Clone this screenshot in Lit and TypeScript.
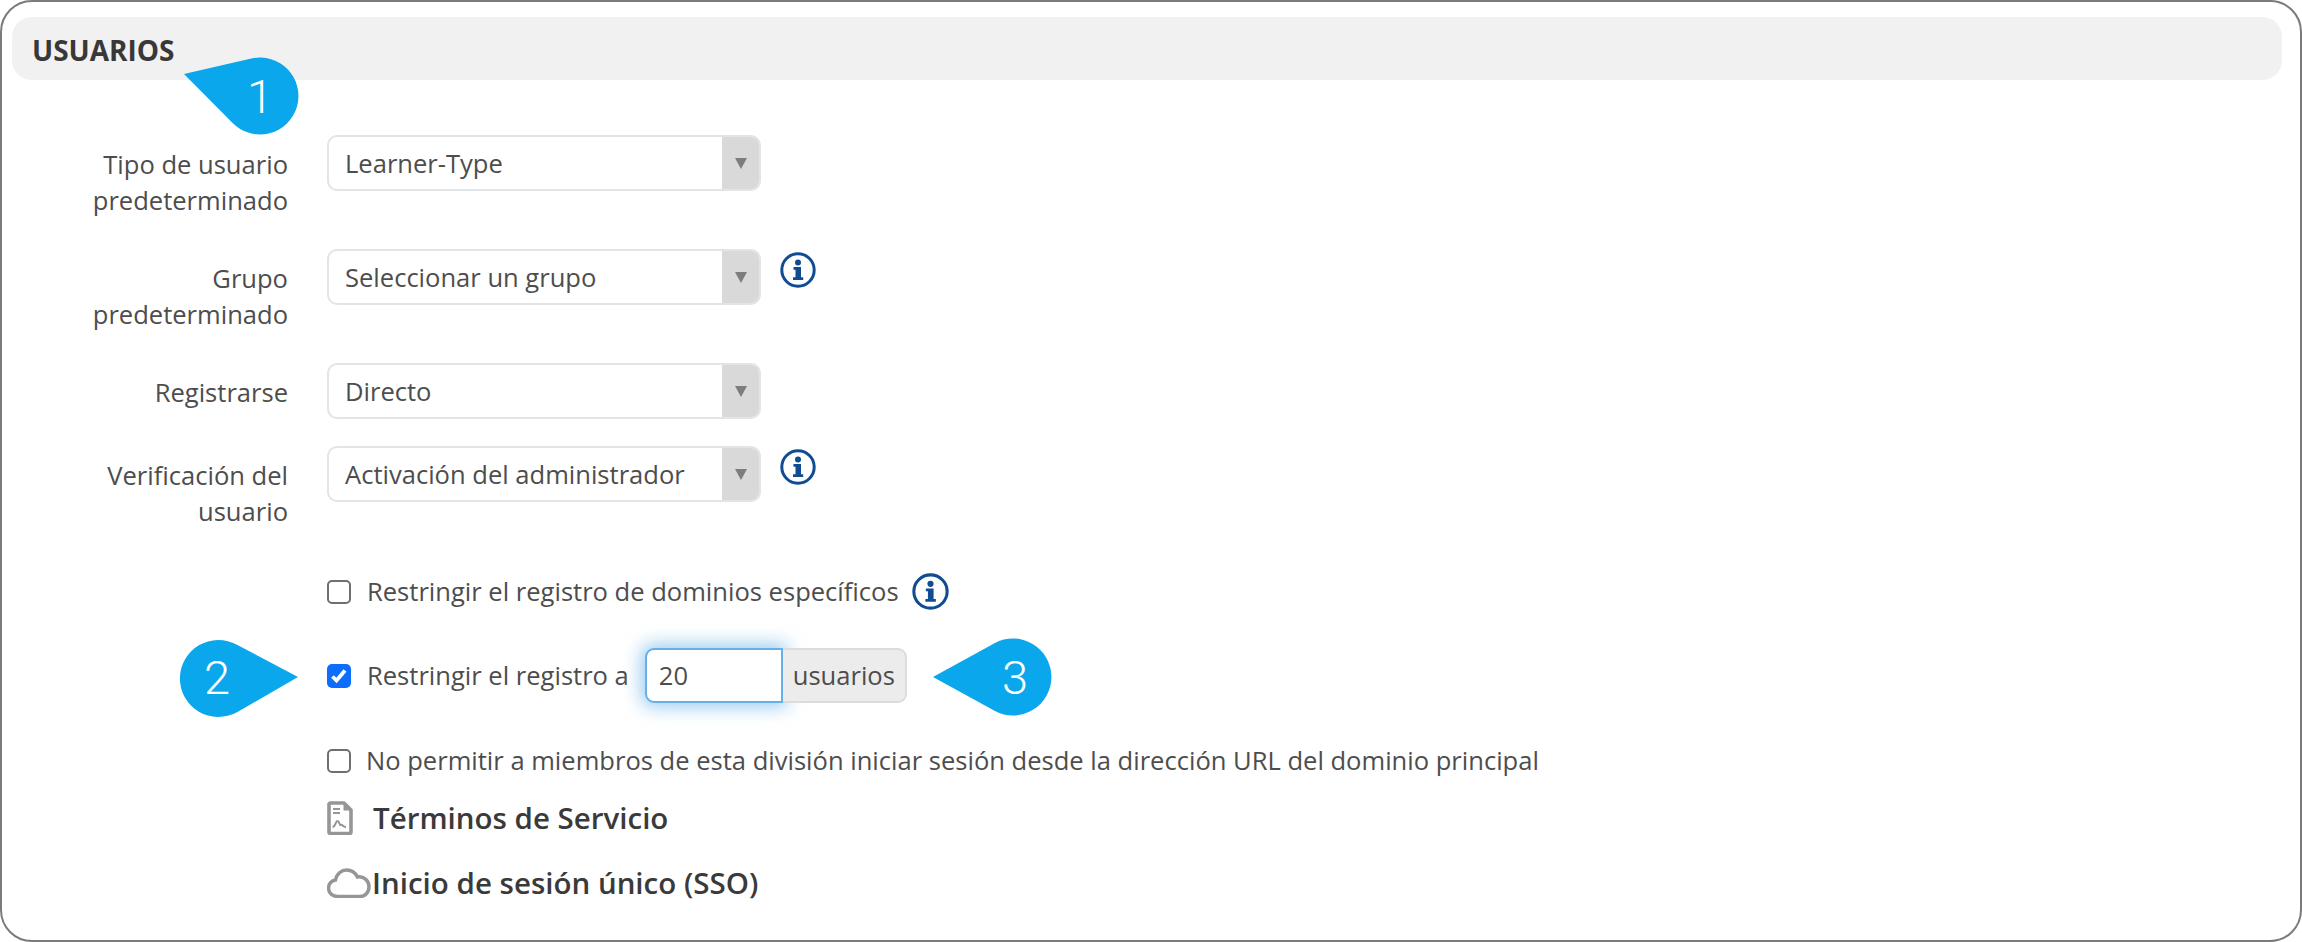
import { LitElement, html, css, svg } from "lit";
import { customElement } from "lit/decorators.js";

const info = html`<svg class="info" viewBox="0 0 36 36" aria-hidden="true">
  <circle cx="18" cy="18" r="16.200" fill="none" stroke="#0f4c92" stroke-width="3"></circle>
  <circle cx="18" cy="10.500" r="3" fill="#0f4c92"></circle>
  <path d="M13.500 15h7.500v10.200h2.200V28H13v-2.800h2.500v-7.400h-2z" fill="#0f4c92"></path>
</svg>`;

const bubble = (d: string, x: number, y: number, n: string) => svg`
  <path d=${d} fill="#0aa7ec"></path>
  <text x=${x} y=${y} text-anchor="middle" class="num">${n}</text>`;

@customElement("app-root")
export class AppRoot extends LitElement {
  static styles = css`
    :host {
      display: block;
      width: 2302px;
      height: 942px;
      background: #fff;
      font-family: "Open Sans", "Noto Sans", sans-serif;
      font-size: 25.55px;
      line-height: 36px;
      color: #4a4a4a;
    }
    .frame {
      position: relative;
      box-sizing: border-box;
      height: 942px;
      border: 2px solid #7b7b7b;
      border-radius: 32px;
      padding: 15px 18px 0 10px;
      overflow: hidden;
    }
    .head {
      height: 63px;
      background: #f1f1f1;
      border-radius: 20px;
      padding: 2px 0 0 20px;
      display: flex;
      align-items: center;
      font-weight: 700;
      font-size: 28px;
      color: #383838;
      box-sizing: border-box;
    }
    .row {
      display: grid;
      grid-template-columns: 276px 434px auto;
      column-gap: 39px;
      align-items: start;
    }
    .row.r1 { margin-top: 55px; }
    .row.r2 { margin-top: 31px; }
    .row.r3 { margin-top: 31px; }
    .row.r4 { margin-top: 27px; }
    .label {
      text-align: right;
      padding: 11px 0 0 60px;
      color: #4d4d4d;
    }
    .select {
      box-sizing: border-box;
      height: 56px;
      border: 2px solid #e0e5e9;
      border-radius: 10px;
      display: flex;
      align-items: stretch;
      justify-content: space-between;
      padding-left: 16px;
      line-height: 52px;
      color: #4d4d4d;
    }
    .arrow {
      width: 37px;
      background: #d9d9d9;
      border-radius: 0 8px 8px 0;
      display: flex;
      align-items: center;
      justify-content: center;
    }
    .arrow i {
      display: block;
      border-left: 6px solid transparent;
      border-right: 6px solid transparent;
      border-top: 11px solid #7d7d7d;
    }
    .info { width: 36px; height: 36px; display: block; }
    .row .info { margin: 3px 0 0 -20px; }
    .checks { margin-left: 315px; }
    .check {
      display: flex;
      align-items: center;
      height: 55px;
      color: #4d4d4d;
    }
    .check.c1 { margin-top: 35px; }
    .check.c2 { margin-top: 29px; }
    .check.c3 { margin-top: 30px; }
    .t { margin-bottom: 2px; }
    .box {
      box-sizing: border-box;
      width: 24px;
      height: 24px;
      border: 2px solid #6f6f6f;
      border-radius: 5px;
      flex: none;
      margin-right: 16px;
      background: #fff;
    }
    .box.on {
      border: 0;
      background: #0d6efd;
    }
    .box svg { width: 24px; height: 24px; display: block; }
    .c1 .info { margin-left: 13px; width: 37px; height: 37px; }
    .c3 .box { margin-right: 15px; }
    .group { display: flex; margin-left: 16px; height: 55px; }
    .input {
      box-sizing: border-box;
      width: 138px;
      border: 2px solid #66afe9;
      border-radius: 9px 0 0 9px;
      box-shadow: 0 0 18px 4px rgba(102, 175, 233, 0.65);
      padding-left: 12px;
      line-height: 51px;
      background: #fff;
      color: #4d4d4d;
    }
    .addon {
      box-sizing: border-box;
      width: 124px;
      border: 2px solid #dcdcdc;
      border-left: 0;
      border-radius: 0 9px 9px 0;
      background: #ececec;
      line-height: 51px;
      text-align: center;
      color: #4d4d4d;
    }
    .sec {
      display: flex;
      align-items: center;
      font-size: 29.5px;
      font-weight: 600;
      color: #3a3a3a;
      line-height: 38px;
    }
    .sec.s1 { margin-top: 11px; }
    .sec.s2 { margin-top: 27px; }
    .sec svg { display: block; flex: none; }
    .doc { margin-right: 20px; }
    .overlay {
      position: absolute;
      left: -2px;
      top: -2px;
      width: 2302px;
      height: 942px;
      pointer-events: none;
    }
    .num {
      font-family: "Roboto", "Liberation Sans", sans-serif;
      font-size: 47px;
      font-weight: 300;
      fill: #fff;
    }
  `;

  private sel(text: string) {
    return html`<div class="select"><span>${text}</span><span class="arrow"><i></i></span></div>`;
  }

  render() {
    return html`<div class="frame">
      <div class="head">USUARIOS</div>
      <div class="row r1"><div class="label">Tipo de usuario predeterminado</div>${this.sel("Learner-Type")}</div>
      <div class="row r2"><div class="label">Grupo predeterminado</div>${this.sel("Seleccionar un grupo")}${info}</div>
      <div class="row r3"><div class="label">Registrarse</div>${this.sel("Directo")}</div>
      <div class="row r4"><div class="label">Verificación del usuario</div>${this.sel("Activación del administrador")}${info}</div>
      <div class="checks">
        <div class="check c1"><span class="box"></span><span class="t">Restringir el registro de dominios específicos</span>${info}</div>
        <div class="check c2">
          <span class="box on"><svg viewBox="0 0 24 24"><path d="M5.500 12.500l4 4L18 6.500" fill="none" stroke="#fff" stroke-width="3.800"></path></svg></span>
          <span class="t">Restringir el registro a</span>
          <div class="group"><div class="input">20</div><div class="addon">usuarios</div></div>
        </div>
        <div class="check c3"><span class="box"></span><span class="t">No permitir a miembros de esta división iniciar sesión desde la dirección URL del dominio principal</span></div>
        <div class="sec s1">
          <svg class="doc" width="26" height="34" viewBox="0 0 26 34">
            <path d="M3 2h14l7 7v22a1.500 1.500 0 0 1-1.500 1.500h-19.500A1.500 1.500 0 0 1 2 31V3z" fill="none" stroke="#969696" stroke-width="3.600" stroke-linejoin="round"></path>
            <path d="M16.500 2v7.500H24z" fill="#969696"></path>
            <path d="M6 8h7M6 12h7" stroke="#969696" stroke-width="2.200"></path>
            <path d="M5.500 26c3 0 3-6 5-6s2 5 3.500 4 1.500 2 5 2" fill="none" stroke="#969696" stroke-width="2"></path>
          </svg>
          Términos de Servicio
        </div>
        <div class="sec s2">
          <svg width="45" height="30" viewBox="0 0 45 30">
            <path d="M11 28.500C5 28.500 1.500 24.500 1.500 20c0-4 3-7.500 7-8 1-6 6-10 11-10 5.500 0 9 3 11 7 6-1 11.500 3.500 11.500 9.500 0 6-4 10-9 10z" fill="none" stroke="#969696" stroke-width="3.500"></path>
          </svg>
          Inicio de sesión único (SSO)
        </div>
      </div>
      <svg class="overlay" viewBox="0 0 2302 942">
        ${bubble("M184 74 L251.300 58.500 A38.500 38.500 0 1 1 232.600 123.100 Z", 260, 113, "1")}
        ${bubble("M298 677 L237 644.800 A38.500 38.500 0 1 0 237 712.200 Z", 217, 694, "2")}
        ${bubble("M933 677 L994.500 643.200 A38.500 38.500 0 1 1 994.500 710.800 Z", 1015, 694, "3")}
      </svg>
    </div>`;
  }
}
